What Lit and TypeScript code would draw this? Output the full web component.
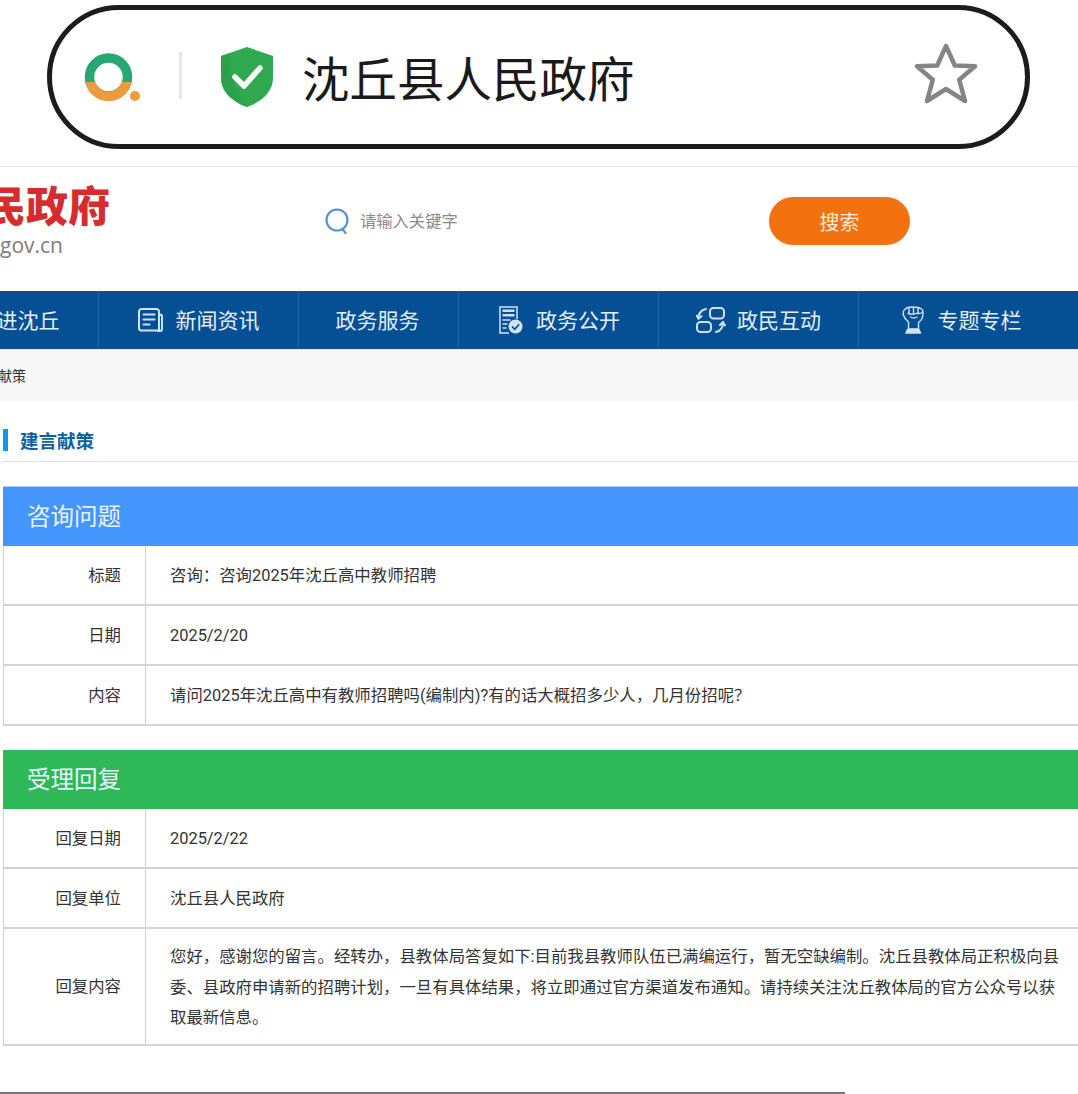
import { LitElement, html, css, svg } from "lit";
import { customElement } from "lit/decorators.js";

const newsIcon = svg`<svg width="25" height="24" viewBox="0 0 25 24" fill="none" stroke="#cfe3f5" stroke-width="2" stroke-linecap="round" stroke-linejoin="round"><path d="M3.500 1h15a2.500 2.500 0 0 1 2.500 2.500v19H3.500A2.500 2.500 0 0 1 1 20.500v-17A2.500 2.500 0 0 1 3.500 1z"/><path d="M21 6l3 1.500V21a2 2 0 0 1-2 2h-2"/><path d="M5.500 6.500h11M5.500 11.500h11M5.500 16.500h6"/></svg>`;
const publicIcon = svg`<svg width="24" height="28" viewBox="0 0 24 28" fill="none" stroke="#cfe3f5" stroke-width="1.500"><path d="M10 27H1V1h17v12"/><path d="M3.500 3.500h12v2.500h-12z" fill="#cfe3f5" stroke="none"/><path d="M3.500 8h12v2.500h-12z" fill="#cfe3f5" stroke="none"/><path d="M3.500 14h8M3.500 18h5M3.500 22h4"/><circle cx="16.500" cy="20.500" r="7" fill="#cfe3f5" stroke="none"/><path d="M13 20.500l2.700 2.800 4.500-5" stroke="#054f94" stroke-width="1.700"/></svg>`;
const interactIcon = svg`<svg width="30" height="26" viewBox="0 0 30 26" fill="none" stroke="#cfe3f5" stroke-width="2" stroke-linecap="round" stroke-linejoin="round"><rect x="14" y="1" width="14" height="10.500" rx="3.500"/><rect x="1" y="15" width="14" height="10" rx="3.500"/><path d="M10 2C5.500 3 2.500 6 2.500 11.500"/><path d="M.5 8.500l2 3.200 3-2.500"/><path d="M20 25c4.500-1 7-4.500 7-9.500"/><path d="M24 18l3-3 2 3.500"/></svg>`;
const fistIcon = svg`<svg width="22" height="28" viewBox="0 0 22 28" fill="none" stroke="#cfe3f5" stroke-width="1.400" stroke-linejoin="round" stroke-linecap="round"><path d="M1.500 5C3 2.500 6 1 10 1c4 0 9 .5 10.500 3 .8 3 .5 6-.5 8.500-1 2-2.500 3-3.500 4V23H6.500v-7C4 14 2 11.500 1.200 8.500z"/><path d="M7 2v5.500M11.500 1.500V7.500M16 2v5.500M6 7.500c3 1.200 6 .8 8.500-.2 2 .5 4 .3 6-.8M8.500 11c2 1.200 4.500 1.200 6.500 0"/><path d="M5.500 23.500h11.500l1.500 3.500H4z" fill="#cfe3f5"/></svg>`;

const navItems = [
  { text: "走进沈丘", w: 160, icon: null, gap: 0, pad: -2 },
  { text: "新闻资讯", w: 200, icon: newsIcon, gap: 13, pad: 0 },
  { text: "政务服务", w: 160, icon: null, gap: 0, pad: -2 },
  { text: "政务公开", w: 200, icon: publicIcon, gap: 13, pad: 2 },
  { text: "政民互动", w: 200, icon: interactIcon, gap: 11, pad: 0 },
  { text: "专题专栏", w: 200, icon: fistIcon, gap: 14, pad: 5 },
];

@customElement("app-root")
export class AppRoot extends LitElement {
  static styles = css`
    :host { display: block; width: 1078px; height: 1094px; overflow: hidden; background: #fff; position: relative;
      font-family: Roboto, "Noto Sans CJK SC", sans-serif; color: #333; }
    .bar-wrap { padding: 5px 0 0 47px; box-sizing: border-box; border-bottom: 1px solid #e8e8e8; height: 167px; }
    .bar { width: 983px; height: 144px; box-sizing: border-box; border: 5px solid #1c1c1c; border-radius: 72px;
      display: flex; align-items: center; padding-left: 32px; }
    .bar svg { display: block; flex: none; }
    .sep { width: 3px; height: 47px; background: #e6e6e6; margin-left: 36px; margin-top: -3px; flex: none; }
    .shield { margin-left: 37px; }
    .addr { font-size: 47.500px; color: #1a1a1a; margin-left: 27px; line-height: 60px; margin-top: -1px; font-family: "Noto Sans CJK SC", sans-serif; white-space: nowrap; }
    .star { margin-left: auto; margin-right: 47px; margin-top: -7px; }
    .header { height: 124px; display: flex; align-items: flex-start; }
    .logo { margin-left: -199px; width: 309px; flex: none; text-align: right; white-space: nowrap; overflow: visible; }
    .logo-t { font-size: 42px; line-height: 42px; font-weight: 900; color: #d62c2e; margin-top: 16px; font-family: "Noto Sans CJK SC", sans-serif; }
    .logo-u { font-size: 21px; line-height: 26px; color: #7d7d7d; padding-right: 47px; margin-top: 7px; font-family: "Open Sans", sans-serif; }
    .search { display: flex; align-items: center; margin-left: 215px; margin-top: 41px; height: 26px; flex: none; }
    .search svg { display: block; }
    .ph { font-size: 16.300px; color: #8a8a8a; margin-left: 11px; width: 409px; margin-top: -2px; font-family: "Noto Sans CJK SC", sans-serif; }
    .btn { width: 141px; height: 48px; border-radius: 24px; background: #f3710e; color: #fdeedd; font-size: 20px;
      display: flex; align-items: center; justify-content: center; flex: none; font-family: "Noto Sans CJK SC", sans-serif; }
    .nav { display: flex; height: 58px; background: #054f94; margin-left: -61px; width: 1140px; }
    .cell { box-sizing: border-box; border-right: 1px solid #1d63a5; display: flex; align-items: center; justify-content: center;
      color: #e3eef8; font-size: 21px; flex: none; font-family: "Noto Sans CJK SC", sans-serif; }
    .cell:last-child { border-right: none; }
    .cell svg { display: block; }
    .cell span { margin-top: -3px; }
    .crumb { height: 53px; background: #f7f7f7; display: flex; align-items: center; font-size: 14px; color: #333; margin-left: -30px; padding-bottom: 3px;
      font-family: "Noto Sans CJK SC", sans-serif; white-space: nowrap; border-top: 1px solid #dbe9f5; box-sizing: border-box; }
    .title { margin: 27px 0 0 2px; height: 32px; border-bottom: 1px solid #e0e0e0; display: flex; align-items: flex-start; }
    .title i { display: block; width: 5px; height: 22px; background: #1296e8; margin-left: 1px; flex: none; }
    .title span { font-size: 18.500px; line-height: 22px; font-weight: 700; color: #0f5f9f; margin-left: 12px; font-family: "Noto Sans CJK SC", sans-serif; }
    .tbl { margin: 24px 0 0 3px; width: 1200px; border-left: 1px solid #cfcfcf; }
    .tbl + .tbl { margin-top: 24px; }
    .head { height: 59px; color: #e9f3ff; font-size: 23.500px; display: flex; align-items: center; margin-left: -1px; padding: 0 0 3px 24px; font-family: "Noto Sans CJK SC", sans-serif; box-sizing: border-box; }
    .head.blue { background: #4496fd; border-top: 1px solid #a9cdf8; height: 60px; }
    .head.green { background: #2fb857; }
    .row { display: flex; border-bottom: 2px solid #d4d4d4; box-sizing: border-box; min-height: 60px; }
    .lab { width: 142px; flex: none; box-sizing: border-box; padding: 2px 24px 0 0; font-size: 16.400px; line-height: 30.500px; color: #333; border-right: 1px solid #cfcfcf;
      display: flex; align-items: center; justify-content: flex-end; }
    .val { padding: 2px 0 0 24px; font-size: 16.400px; color: #333; display: flex; align-items: center; width: 890px; line-height: 30.500px; }
    .val.multi { padding-top: 13px; padding-bottom: 10px; }
    .bottom { position: absolute; left: 0; top: 1092px; width: 845px; height: 2px; background: #777; }
  `;

  render() {
    return html`
      <div class="bar-wrap">
        <div class="bar">
          <svg width="59" height="50" viewBox="0 0 59 50">
            <circle cx="24.500" cy="25" r="19" fill="none" stroke="#25a871" stroke-width="9.500"/>
            <path d="M1.400 30a23.500 23.500 0 0 0 46.200 0h-9.800a14 14 0 0 1-26.600 0z" fill="#f09a3e"/>
            <circle cx="51" cy="44" r="5" fill="#f09a3e"/>
          </svg>
          <div class="sep"></div>
          <svg class="shield" width="56" height="62" viewBox="0 0 56 62">
            <path d="M28 1L54 10v22C54 46 42 56 28 61 14 56 2 46 2 32V10z" fill="#2fa84f"/>
            <path d="M28 61C14 56 2 46 2 32V10l8-3c-1 14 4 36 18 54z" fill="#2a9a48" opacity=".55"/>
            <path d="M16 31l9 9 16-18" fill="none" stroke="#fff" stroke-width="5.500" stroke-linecap="round" stroke-linejoin="round"/>
          </svg>
          <div class="addr">沈丘县人民政府</div>
          <svg class="star" width="64" height="62" viewBox="0 0 64 62">
            <path d="M32 3l8.800 19.500 20.200 .8-15.800 13.400 5.800 21.300L32 46 13 58l5.800-21.300L3 23.300l20.200-.8z" fill="none" stroke="#858585" stroke-width="4.500" stroke-linejoin="round"/>
          </svg>
        </div>
      </div>

      <div class="header">
        <div class="logo">
          <div class="logo-t">沈丘县人民政府</div>
          <div class="logo-u">www.shenqiu.gov.cn</div>
        </div>
        <div class="search">
          <svg width="24" height="26" viewBox="0 0 24 26" fill="none" stroke="#5a8fd6" stroke-width="2.200" stroke-linecap="round"><circle cx="12" cy="12" r="10.500"/><path d="M17.500 21l3 4"/></svg>
          <span class="ph">请输入关键字</span>
          <div class="btn">搜索</div>
        </div>
      </div>

      <div class="nav">
        ${navItems.map(
          (n) => html`<div class="cell" style="width:${n.w}px;gap:${n.gap}px;${n.pad >= 0 ? `padding-left:${n.pad}px` : `padding-right:${-n.pad}px`}">${n.icon}<span>${n.text}</span></div>`
        )}
      </div>

      <div class="crumb">建言献策</div>

      <div class="title"><i></i><span>建言献策</span></div>

      <div class="tbl">
        <div class="head blue">咨询问题</div>
        <div class="row"><div class="lab">标题</div><div class="val">咨询：咨询2025年沈丘高中教师招聘</div></div>
        <div class="row"><div class="lab">日期</div><div class="val">2025/2/20</div></div>
        <div class="row"><div class="lab">内容</div><div class="val">请问2025年沈丘高中有教师招聘吗(编制内)?有的话大概招多少人，几月份招呢？</div></div>
      </div>

      <div class="tbl">
        <div class="head green">受理回复</div>
        <div class="row"><div class="lab">回复日期</div><div class="val">2025/2/22</div></div>
        <div class="row"><div class="lab">回复单位</div><div class="val">沈丘县人民政府</div></div>
        <div class="row"><div class="lab">回复内容</div><div class="val multi">您好，感谢您的留言。经转办，县教体局答复如下:目前我县教师队伍已满编运行，暂无空缺编制。沈丘县教体局正积极向县委、县政府申请新的招聘计划，一旦有具体结果，将立即通过官方渠道发布通知。请持续关注沈丘教体局的官方公众号以获取最新信息。</div></div>
      </div>

      <div class="bottom"></div>
    `;
  }
}
